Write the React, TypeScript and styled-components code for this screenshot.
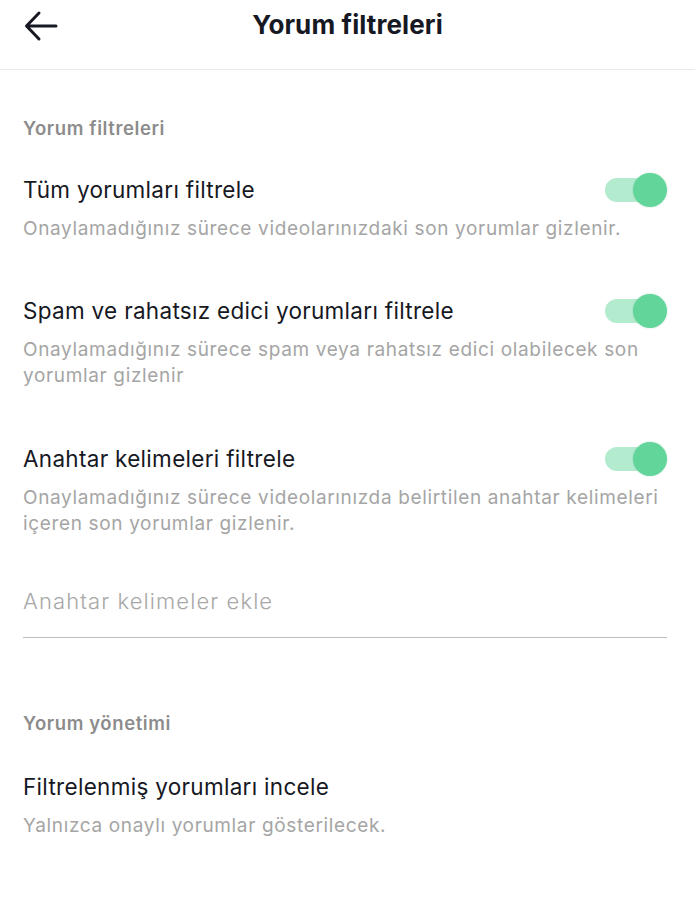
import React from 'react'
import styled, { createGlobalStyle } from 'styled-components'

const GlobalStyle = createGlobalStyle`
  html, body {
    margin: 0;
    padding: 0;
    background: #ffffff;
  }
  body {
    font-family: Inter, "Noto Sans", sans-serif;
    -webkit-font-smoothing: antialiased;
  }
`

const Page = styled.div`
  width: 695px;
  min-height: 897px;
  background: #ffffff;
`

const Header = styled.header`
  display: grid;
  grid-template-columns: 80px 1fr 80px;
  align-items: center;
  height: 69px;
  border-bottom: 1px solid #e9e9e9;
`

const BackButton = styled.button`
  display: flex;
  align-items: center;
  justify-content: flex-start;
  padding: 0 0 18px 24px;
  border: 0;
  background: none;
  cursor: pointer;
`

const Title = styled.h1`
  margin: 0 0 20px;
  text-align: center;
  font-size: 26px;
  font-weight: 700;
  letter-spacing: 0.1px;
  color: #161823;
`

const Content = styled.main`
  padding: 46px 28px 40px 23px;
`

const SectionLabel = styled.h2<{ $gap: number }>`
  margin: 0 0 ${({ $gap }) => $gap}px;
  font-size: 18.5px;
  line-height: 24px;
  font-weight: 600;
  letter-spacing: 0.6px;
  color: #8c8c8c;
`

const Item = styled.section<{ $gap: number }>`
  display: flex;
  flex-direction: column;
  gap: 11px;
  margin-bottom: ${({ $gap }) => $gap}px;
`

const ItemHead = styled.div`
  display: flex;
  align-items: center;
  justify-content: space-between;
  height: 30px;
`

const ItemTitle = styled.div`
  font-size: 22.5px;
  line-height: 30px;
  letter-spacing: 0.3px;
  color: #161823;
`

const ItemText = styled.p`
  margin: 0;
  font-size: 19px;
  line-height: 26px;
  letter-spacing: 0.65px;
  color: #a5a5a5;
`

const Toggle = styled.span`
  position: relative;
  display: block;
  width: 62px;
  height: 34px;
  flex-shrink: 0;
`

const Track = styled.span`
  position: absolute;
  left: 0;
  top: 5px;
  width: 55px;
  height: 24px;
  border-radius: 12px;
  background: #b3ebcf;
`

const Knob = styled.span`
  position: absolute;
  right: 0;
  top: 0;
  width: 34px;
  height: 34px;
  border-radius: 50%;
  background: #62d59b;
  box-shadow: 0 0 2px rgba(60, 170, 110, 0.35);
`

const KeywordInput = styled.input`
  display: block;
  width: 100%;
  box-sizing: border-box;
  margin: 0 0 73px;
  padding: 0 0 21px;
  border: 0;
  border-bottom: 1px solid #bdbdbd;
  font-family: Inter, "Noto Sans", sans-serif;
  font-size: 22px;
  line-height: 30px;
  letter-spacing: 1.1px;
  font-weight: 300;
  color: #161823;
  background: transparent;
  outline: none;

  &::placeholder {
    color: #a8a8a8;
  }
`

const BackArrow: React.FC = () => (
  <svg width="34" height="32" viewBox="0 0 34 32" fill="none">
    <path d="M32 16H3M15 3L2.5 16L15 29" stroke="#161823" strokeWidth="3" strokeLinecap="round" strokeLinejoin="round" />
  </svg>
)

const Switch: React.FC = () => (
  <Toggle role="switch" aria-checked="true">
    <Track />
    <Knob />
  </Toggle>
)

const FilterItem: React.FC<{
  title: string
  text: string
  toggle?: boolean
  gap: number
}> = ({ title, text, toggle, gap }) => (
  <Item $gap={gap}>
    <ItemHead>
      <ItemTitle>{title}</ItemTitle>
      {toggle && <Switch />}
    </ItemHead>
    <ItemText>{text}</ItemText>
  </Item>
)

const App: React.FC = () => {
  return (
    <Page>
      <GlobalStyle />
      <Header>
        <BackButton aria-label="Geri">
          <BackArrow />
        </BackButton>
        <Title>Yorum filtreleri</Title>
        <span />
      </Header>
      <Content>
        <SectionLabel $gap={35}>Yorum filtreleri</SectionLabel>
        <FilterItem
          toggle
          gap={54}
          title="Tüm yorumları filtrele"
          text="Onaylamadığınız sürece videolarınızdaki son yorumlar gizlenir." />
        <FilterItem
          toggle
          gap={55}
          title="Spam ve rahatsız edici yorumları filtrele"
          text="Onaylamadığınız sürece spam veya rahatsız edici olabilecek son yorumlar gizlenir" />
        <FilterItem
          toggle
          gap={49}
          title="Anahtar kelimeleri filtrele"
          text="Onaylamadığınız sürece videolarınızda belirtilen anahtar kelimeleri içeren son yorumlar gizlenir." />
        <KeywordInput placeholder="Anahtar kelimeler ekle" />
        <SectionLabel $gap={37}>Yorum yönetimi</SectionLabel>
        <FilterItem
          gap={0}
          title="Filtrelenmiş yorumları incele"
          text="Yalnızca onaylı yorumlar gösterilecek." />
      </Content>
    </Page>
  )
}

export default App
